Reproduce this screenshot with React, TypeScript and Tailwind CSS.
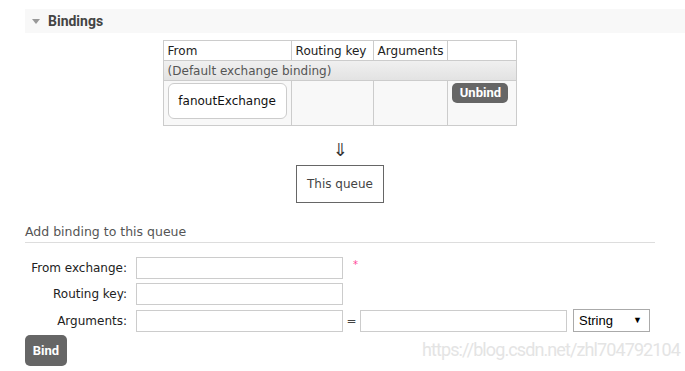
const body = "font-['Verdana','DejaVu_Sans',sans-serif] text-[12px]";

/** 入力欄 */
function Field({ className = "" }: { className?: string }) {
  return (
    <input
      type="text"
      className={`h-[22px] w-[207px] border border-[#ccc] bg-white outline-none ${className}`}
    />
  );
}

/** バインディング表 */
function BindingTable() {
  return (
    <table className="mx-auto border-collapse text-[#222]">
      <thead>
        <tr className="h-[20px] bg-white">
          <th className="w-[127px] border border-[#ccc] px-[4px] text-left font-normal">From</th>
          <th className="w-[82px] border border-[#ccc] px-[4px] text-left font-normal">Routing key</th>
          <th className="w-[74px] border border-[#ccc] px-[4px] text-left font-normal">Arguments</th>
          <th className="w-[69px] border border-[#ccc]" />
        </tr>
      </thead>
      <tbody>
        <tr className="h-[20px] bg-gradient-to-b from-[#f0f0f0] to-[#e2e2e2]">
          <td colSpan={4} className="border border-[#ccc] px-[4px] text-[#555]">
            (Default exchange binding)
          </td>
        </tr>
        <tr className="h-[45px] bg-[#f8f8f8] align-top">
          <td className="border border-[#ccc] px-[4px] pt-[2px]">
            <div className="flex h-[36px] w-[119px] items-center justify-center rounded-[6px] border border-[#ccc] bg-white text-[#111]">
              fanoutExchange
            </div>
          </td>
          <td className="border border-[#ccc]" />
          <td className="border border-[#ccc]" />
          <td className="border border-[#ccc] px-[4px] pt-[2px]">
            <button className="h-[20px] w-[56px] rounded-[5px] bg-[#666] font-['Roboto',sans-serif] text-[13px] font-bold text-white">
              Unbind
            </button>
          </td>
        </tr>
      </tbody>
    </table>
  );
}

export default function App() {
  return (
    <div className={`h-[371px] w-[685px] overflow-hidden bg-white pl-[25px] pt-[9px] ${body}`}>
      {/* 見出し */}
      <div className="flex h-[24px] items-center gap-[8px] bg-[#f8f8f8] pl-[7px]">
        <span className="h-0 w-0 border-x-[4px] border-t-[5px] border-x-transparent border-t-[#999]" />
        <span className="font-['Roboto',sans-serif] text-[14px] font-bold text-[#444]">Bindings</span>
      </div>

      <div className="w-[630px]">
        <div className="mt-[7px]">
          <BindingTable />
        </div>

        {/* このキュー */}
        <div className="mt-[14px] flex flex-col items-center">
          <span className="text-[18px] leading-[20px] text-[#333]">⇓</span>
          <div className="mt-[5px] flex h-[38px] w-[88px] items-center justify-center border border-[#666] text-[#444]">
            This queue
          </div>
        </div>

        {/* 追加フォーム */}
        <div className="mt-[22px] border-b border-[#ddd] pb-[3px] text-[12.5px] leading-[14px] text-[#555]">
          Add binding to this queue
        </div>

        <div className="mt-[14px] flex flex-col gap-[4px]">
          <div className="flex items-center">
            <label className="w-[102px] text-right text-[#222]">From exchange:</label>
            <Field className="ml-[9px]" />
            <span className="ml-[10px] self-start text-[10px] text-[#f49]">*</span>
          </div>
          <div className="flex items-center">
            <label className="w-[102px] text-right text-[#222]">Routing key:</label>
            <Field className="ml-[9px]" />
          </div>
          <div className="flex items-center">
            <label className="w-[102px] text-right text-[#222]">Arguments:</label>
            <Field className="ml-[9px]" />
            <span className="w-[17px] text-center text-[#444]">=</span>
            <Field />
            <div className="ml-[6px] flex h-[23px] w-[77px] items-center justify-between border border-[#aaa] bg-white pl-[5px] pr-[7px] font-['Liberation_Sans',sans-serif] text-[13px] text-black">
              <span>String</span>
              <span className="text-[9px]">▼</span>
            </div>
          </div>
        </div>
      </div>

      <div className="flex items-start justify-between pr-[5px]">
        <button className="mt-[3px] h-[31px] w-[42px] rounded-[5px] bg-[#666] font-['Roboto',sans-serif] text-[13px] font-bold text-white">
          Bind
        </button>
        <span className="mt-[7px] font-['Roboto',sans-serif] text-[18px] leading-[22px] tracking-[-0.9px] text-[#e4e4e4]">
          https://blog.csdn.net/zhl704792104
        </span>
      </div>
    </div>
  );
}
